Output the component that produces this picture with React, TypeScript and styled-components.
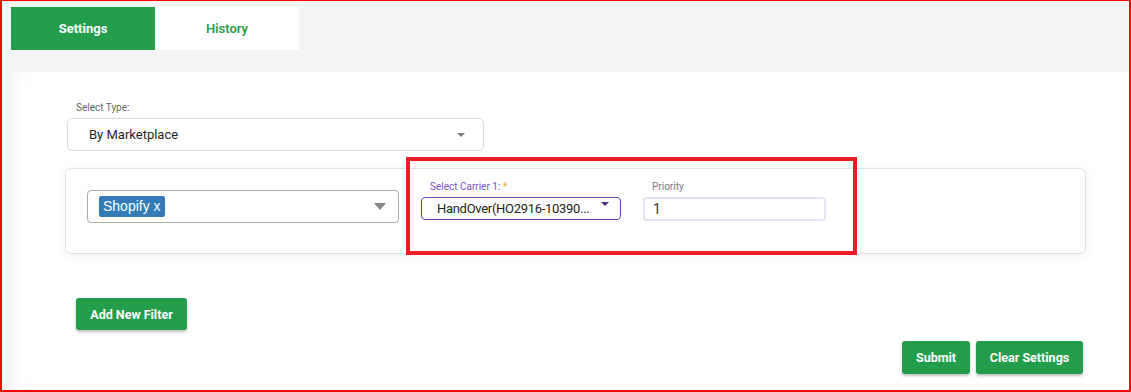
import React from "react";
import styled, { createGlobalStyle } from "styled-components";

const GREEN = "#229e4a";

const Global = createGlobalStyle`
  html, body { margin: 0; padding: 0; }
  body { font-family: Roboto, "Noto Sans", Arial, sans-serif; background: #fff; }
  * { box-sizing: border-box; }
`;

const Frame = styled.div`
  position: relative;
  width: 1131px;
  height: 392px;
  border: 2px solid #ff0000;
  border-top-width: 1px;
  background: #f3f4f6;
  display: flex;
  flex-direction: column;
  padding: 6px 0 0 9px;
  overflow: hidden;
`;

const TabBar = styled.div`
  display: flex;
  height: 43px;
  flex-shrink: 0;
`;

const Tab = styled.div<{ $active?: boolean }>`
  width: 144px;
  display: flex;
  align-items: center;
  justify-content: center;
  font-size: 13px;
  font-weight: ${(p) => (p.$active ? 700 : 600)};
  background: ${(p) => (p.$active ? GREEN : "#fff")};
  color: ${(p) => (p.$active ? "#fff" : "#2a9f4c")};
`;

const Card = styled.div`
  margin-top: 22px;
  flex: 1;
  background: #fff;
  border-radius: 5px 0 0 0;
  box-shadow: inset 14px 0 20px -14px rgba(0, 0, 0, 0.05);
  padding: 30px 0 0 55px;
  display: flex;
  flex-direction: column;
`;

const Field = styled.div<{ $ml?: number }>`
  display: flex;
  flex-direction: column;
  margin-left: ${(p) => p.$ml ?? 0}px;
`;

const Label = styled.div<{ $color?: string }>`
  font-size: 10px;
  line-height: 12px;
  margin: 0 0 4px 9px;
  white-space: nowrap;
  color: ${(p) => p.$color ?? "#666"};
`;

const Star = styled.span`
  color: #e8a90c;
`;

const TypeBox = styled.div`
  width: 417px;
  height: 33px;
  border: 1px solid #dcdcdc;
  border-radius: 5px;
  display: flex;
  align-items: center;
  justify-content: space-between;
  padding: 0 18px 0 21px;
  font-size: 13px;
  color: #1f1f1f;
`;

const Caret = styled.span<{ $w: number; $h: number; $c: string }>`
  flex-shrink: 0;
  width: 0;
  height: 0;
  border-left: ${(p) => p.$w / 2}px solid transparent;
  border-right: ${(p) => p.$w / 2}px solid transparent;
  border-top: ${(p) => p.$h}px solid ${(p) => p.$c};
`;

const FilterCard = styled.div`
  margin-top: 17px;
  width: 1021px;
  height: 86px;
  border: 1px solid #e1e0ef;
  border-radius: 6px;
  box-shadow: 0 2px 8px rgba(60, 60, 100, 0.07);
  display: flex;
  align-items: flex-start;
  padding: 12px 0 0 21px;
  margin-left: -1px;
`;

const MultiSelect = styled.div`
  margin-top: 9px;
  width: 312px;
  height: 33px;
  border: 1px solid #ababab;
  border-radius: 4px;
  display: flex;
  align-items: center;
  justify-content: space-between;
  padding: 0 12px 0 11px;
`;

const Chip = styled.span`
  background: #337ab7;
  color: #fff;
  font-family: "Liberation Sans", Arial, sans-serif;
  font-size: 14px;
  height: 21px;
  line-height: 21px;
  padding: 0 4px;
  border-radius: 2px;
`;

const CarrierBox = styled.div`
  width: 200px;
  height: 23px;
  border: 1px solid #6a3fb5;
  border-radius: 4px;
  display: flex;
  align-items: center;
  justify-content: space-between;
  padding: 0 11px 0 15px;
  font-size: 13px;
  letter-spacing: -0.3px;
  color: #222;
`;

const CarrierText = styled.span`
  white-space: nowrap;
`;

const CarrierCaret = styled(Caret)`
  align-self: flex-start;
  margin-top: 4px;
  margin-left: 4px;
`;

const PriorityBox = styled.div`
  width: 183px;
  height: 24px;
  border: 2px solid #e3e3f1;
  border-radius: 4px;
  display: flex;
  align-items: center;
  padding-left: 8px;
  font-size: 14px;
  color: #333;
`;

const GreenButton = styled.button<{ $w: number; $h: number }>`
  width: ${(p) => p.$w}px;
  height: ${(p) => p.$h}px;
  background: ${GREEN};
  color: #fff;
  border: none;
  border-radius: 3px;
  font-family: Roboto, Arial, sans-serif;
  font-size: 12.5px;
  font-weight: 700;
  padding: 0;
  white-space: nowrap;
  box-shadow: 0 2px 3px rgba(0, 0, 0, 0.25);
`;

const AddRow = styled.div`
  margin: 44px 0 0 10px;
`;

const ActionRow = styled.div`
  margin-top: 11px;
  display: flex;
  justify-content: flex-end;
  gap: 6px;
  padding-right: 46px;
`;

const Highlight = styled.div`
  position: absolute;
  left: 404px;
  top: 156px;
  width: 451px;
  height: 98px;
  border: 4px solid #ec1c24;
  pointer-events: none;
`;

export default function App() {
  return (
    <>
      <Global />
      <Frame>
        <TabBar>
          <Tab $active>Settings</Tab>
          <Tab>History</Tab>
        </TabBar>
        <Card>
          <Field $ml={1}>
            <Label>Select Type:</Label>
            <TypeBox>
              <span>By Marketplace</span>
              <Caret $w={9} $h={4} $c="#777" />
            </TypeBox>
          </Field>
          <FilterCard>
            <MultiSelect>
              <Chip>Shopify x</Chip>
              <Caret $w={13} $h={7} $c="#888" />
            </MultiSelect>
            <Field $ml={22}>
              <Label $color="#7b52c7">
                Select Carrier 1: <Star>*</Star>
              </Label>
              <CarrierBox>
                <CarrierText>HandOver(HO2916-10390...</CarrierText>
                <CarrierCaret $w={8} $h={4} $c="#4a2d80" />
              </CarrierBox>
            </Field>
            <Field $ml={22}>
              <Label $color="#7a7a7a">Priority</Label>
              <PriorityBox>1</PriorityBox>
            </Field>
          </FilterCard>
          <AddRow>
            <GreenButton $w={111} $h={32}>Add New Filter</GreenButton>
          </AddRow>
          <ActionRow>
            <GreenButton $w={68} $h={33}>Submit</GreenButton>
            <GreenButton $w={107} $h={33}>Clear Settings</GreenButton>
          </ActionRow>
        </Card>
        <Highlight />
      </Frame>
    </>
  );
}
